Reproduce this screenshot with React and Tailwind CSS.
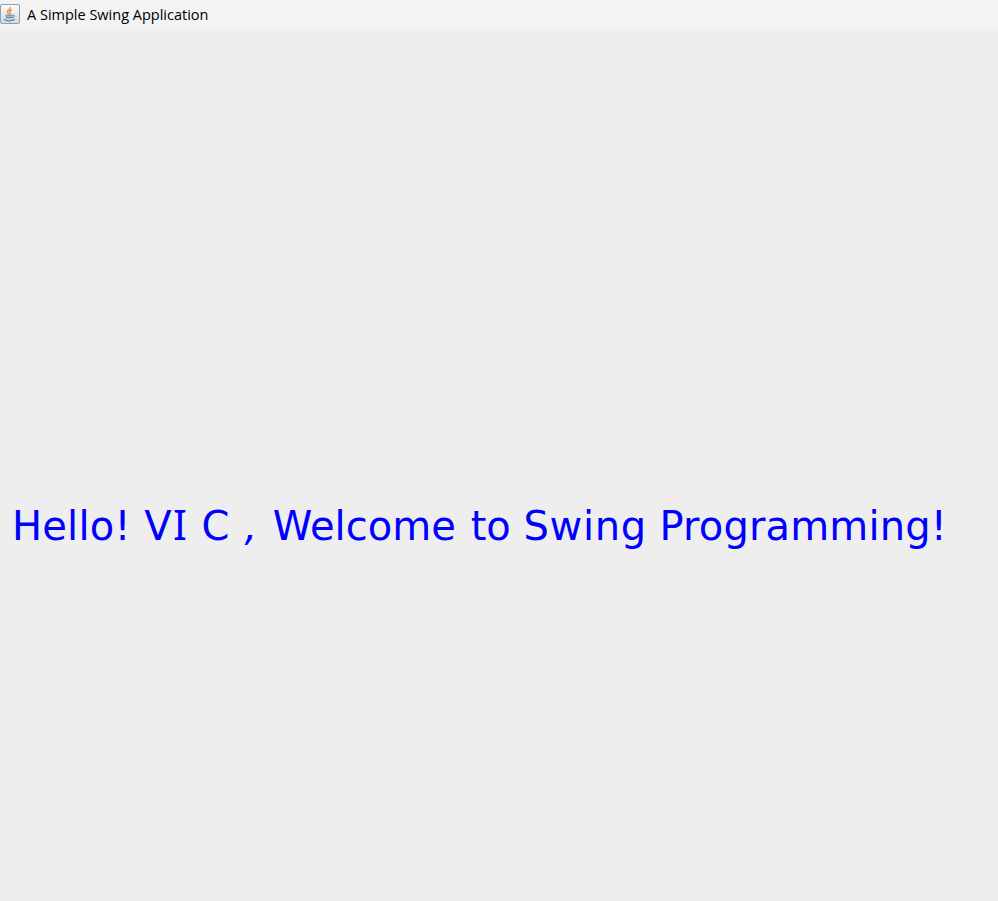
import React from 'react';

function JavaIcon() {
  return (
    <svg className="h-5 w-5 shrink-0" viewBox="0 0 20 20" fill="none">
      <defs>
        <linearGradient id="tile" x1="0" y1="0" x2="0" y2="1">
          <stop offset="0" stopColor="#fcfcfc" />
          <stop offset="1" stopColor="#cfdae3" />
        </linearGradient>
      </defs>
      <rect x="0.500" y="0.500" width="19" height="19" rx="1.500" fill="url(#tile)" stroke="#8f9fac" />
      <path d="M10 3C11.500 5.500 7 6 7.500 8.200c.2 1 1.200 1.400 1.600 2.300M12 5.800c-2 .8-2.500 1.500-1.900 2.500.4.700.2 1.500-.4 2.100" stroke="#ee9348" strokeWidth="1.600" />
      <path d="M5.500 10.800h7v1.200c0 1.600-1 2.600-2.400 2.600H7.900C6.500 14.600 5.500 13.600 5.500 12z" fill="#6f95b5" />
      <path d="M6.500 12.400h5" stroke="#c7d8e5" strokeWidth="0.600" />
      <path d="M12.500 11.300c3-.4 2.800 2-.5 2.300" stroke="#5e87a9" strokeWidth="1" />
      <path d="M4 15.300c2.500 2 8.500 2 11-.2" stroke="#5e87a9" strokeWidth="1.300" />
    </svg>
  );
}

export default function App() {
  return (
    <div className="flex h-[901px] w-[998px] flex-col overflow-hidden bg-[#eeeeee]">
      <header className="flex h-[29px] items-start gap-[7px] bg-[#f3f3f3] pt-1">
        <JavaIcon />
        <h1 className="whitespace-nowrap pt-px font-['Open_Sans',sans-serif] text-[14.5px] leading-5 text-black">A Simple Swing Application</h1>
      </header>
      <main className="flex flex-1 items-center pl-[12px] pt-[120px]">
        <p className="flex items-baseline whitespace-pre font-['DejaVu_Sans',sans-serif] text-[40px] leading-none text-[#0000ff]">
          <span className="w-[132.200px] tracking-[0.2px]">Hello! </span>
          <span className="w-[28.800px]">V</span>
          <span className="w-[28.500px] font-['Noto_Sans',sans-serif] text-[41px] leading-none">I </span>
          <span className="w-[43px]">C </span>
          <span className="w-[28.200px] italic">, </span>
          <span className="w-[198px] tracking-[0.05px]">Welcome </span>
          <span className="w-[52.800px]">to </span>
          <span className="w-[136px] tracking-[0.7px]">Swing </span>
          <span className="tracking-[0.15px]">Programming!</span>
        </p>
      </main>
    </div>
  );
}
